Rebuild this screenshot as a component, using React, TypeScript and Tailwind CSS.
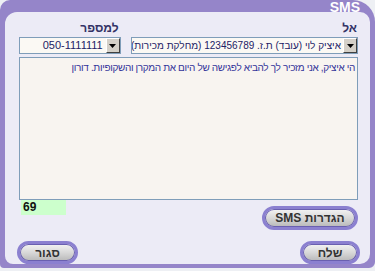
import React from "react";

function Arrow() {
  return (
    <div className="w-[14px] h-[15px] bg-[#d4d0c8] border border-t-[#ffffff] border-l-[#ffffff] border-r-[#404040] border-b-[#404040] flex items-center justify-center shrink-0">
      <svg width="7" height="4" viewBox="0 0 7 4">
        <polygon points="0,0 7,0 3.5,4" fill="#000" />
      </svg>
    </div>
  );
}

function Pill({ children, className }: { children: React.ReactNode; className?: string }) {
  return (
    <div
      className={
        "rounded-full border-[3px] border-[#8b80d0] bg-[linear-gradient(#f4f4f4,#d8d8d8_50%,#b8b8b8)] flex items-center justify-center text-[12px] font-bold text-[#333333] shadow-[inset_0_0_0_1px_#6a60b0] " +
        (className || "")
      }
    >
      {children}
    </div>
  );
}

export default function App() {
  return (
    <div
      dir="rtl"
      className="w-[375px] h-[271px] bg-[#eef0f4] overflow-hidden"
      style={{ fontFamily: '"Liberation Sans", Arial, sans-serif' }}
    >
      <div className="w-[375px] h-[268px] bg-[#9585c9] rounded-tl-[10px] rounded-tr-[22px] rounded-bl-[4px] rounded-br-[6px] flex flex-col">
        <div className="h-[12px] pr-[15px] pt-[2px] flex items-center text-white font-bold text-[14px] leading-none">
          SMS
        </div>
        <div className="mx-[5px] mb-[4px] flex-1 bg-[#ecebf6] rounded-tl-[12px] rounded-tr-[10px] rounded-bl-[8px] rounded-br-[10px] pr-[12px] pl-[14px] pt-[9px] flex flex-col">
          <div className="flex gap-[10px] text-[12px] font-bold text-[#333366] leading-[14px] h-[15px]">
            <div className="w-[228px] pr-[1px]">אל</div>
            <div className="w-[102px] pr-[2px]">למספר</div>
          </div>
          <div className="flex gap-[10px] mt-[1px] h-[17px]">
            <div className="w-[228px] h-[17px] border border-[#7f9db9] bg-[#fbf9f4] flex items-center overflow-hidden">
              <Arrow />
              <div className="pr-[2px] text-[10px] text-[#222266] whitespace-nowrap leading-none">
                איציק לוי (עובד) ת.ז. 123456789 (מחלקת מכירות)
              </div>
            </div>
            <div className="w-[102px] h-[17px] border border-[#7f9db9] bg-[#fbf9f4] flex items-center overflow-hidden">
              <Arrow />
              <div className="pr-[3px] text-[11px] text-[#222266] whitespace-nowrap leading-none">
                050-1111111
              </div>
            </div>
          </div>
          <div className="mt-[3px] h-[143px] border border-[#7f9db9] bg-[#f8f4f0] pr-[2px] pt-[3px] text-[10px] tracking-[-0.35px] text-[#333399] leading-[13px] whitespace-nowrap overflow-hidden">
            הי איציק, אני מזכיר לך להביא לפגישה של היום את המקרן והשקופיות. דורון
          </div>
          <div className="flex justify-between">
            <Pill className="mt-[6px] w-[96px] h-[24px]">הגדרות SMS</Pill>
            <div className="ml-[2px] w-[45px] h-[15px] bg-[#ccffcc] text-[12px] font-bold text-[#111] leading-[15px] text-left pl-[2px]">
              69
            </div>
          </div>
          <div className="flex justify-between mt-[11px]">
            <Pill className="w-[60px] h-[23px] mr-[-2px]">שלח</Pill>
            <Pill className="w-[61px] h-[23px] ml-[-2px]">סגור</Pill>
          </div>
        </div>
      </div>
    </div>
  );
}
